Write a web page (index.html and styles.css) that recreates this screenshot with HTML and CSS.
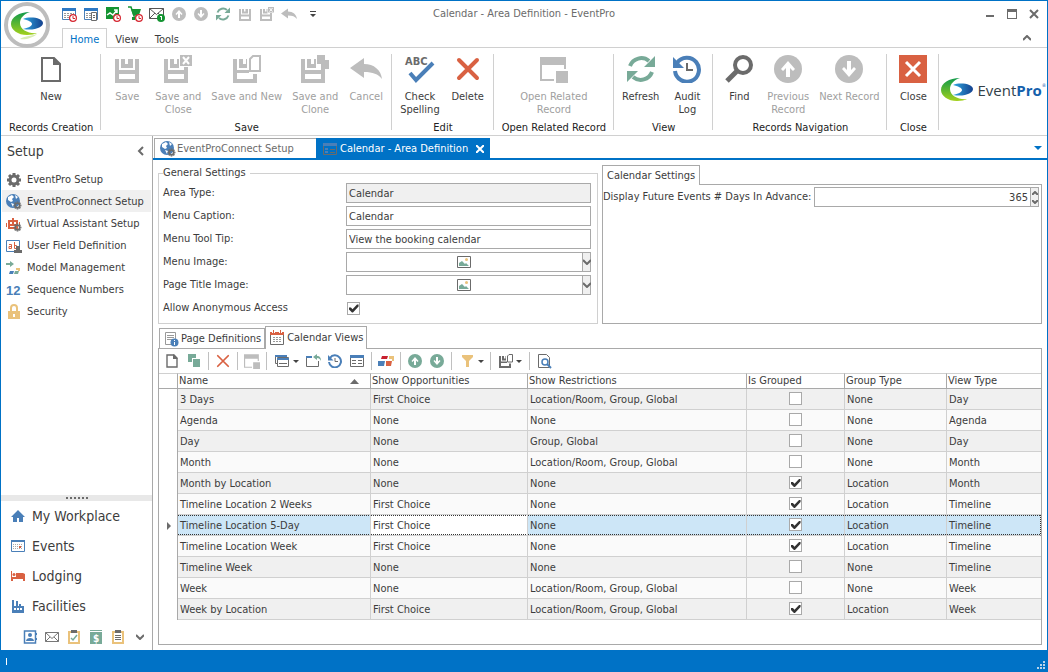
FILE: index.html
```html
<!DOCTYPE html>
<html lang="en">
<head>
    <meta charset="UTF-8">
    <meta name="viewport" content="width=device-width, initial-scale=1.0">
    <title>Calendar - Area Definition - EventPro</title>
    <link rel="stylesheet" href="styles.css">
</head>
<body>
    <!-- Shared icons -->
    <svg class="sprite" aria-hidden="true">
        <defs>
            <linearGradient id="green" x1="0" y1="0" x2="0" y2="1">
                <stop offset="0" stop-color="#0f9a4a"/>
                <stop offset="1" stop-color="#a4d11c"/>
            </linearGradient>
            <linearGradient id="blue" x1="0" y1="0" x2="1" y2="0">
                <stop offset="0" stop-color="#2fa8e0"/>
                <stop offset="1" stop-color="#14418f"/>
            </linearGradient>
        </defs>
        <symbol id="swoosh" viewBox="0 0 32 24">
            <path fill="url(#green)" d="M19 0C8 0 0 5 0 12c0 6 7 11 16 11 4 0 8-1 10-2-8 1-17-3-17-10C9 6 13 2 19 0z"/>
            <path fill="url(#blue)" d="M12 7c7-3 20-1 20 4 0 4-8 8-20 6 5-1 9-3 9-5 0-2-4-4-9-5z"/>
        </symbol>
        <symbol id="floppy" viewBox="0 0 28 28">
            <path fill="currentColor" d="M2 4h4v11h16V4h4v24H2zM6 19v5h16v-5zM8 4h4v5h3V4h5v9H8z" fill-rule="evenodd"/>
        </symbol>
        <symbol id="floppy-close" viewBox="0 0 28 28">
            <path fill="currentColor" fill-rule="evenodd" d="M0 4h4v11h16v-3h4v16H0zM4 19v5h16v-5zM6 4h4v5h3V4h2v9H6z"/>
            <path fill="currentColor" d="M16 0h12v11H16z"/>
            <path stroke="#fff" stroke-width="2" d="M19 2l6 7M25 2l-6 7"/>
        </symbol>
        <symbol id="floppy-new" viewBox="0 0 28 28">
            <path fill="currentColor" fill-rule="evenodd" d="M0 4h4v11h12v3H4v6h16v-5h4v9H0zM6 4h4v5h3V4h1v9H6z"/>
            <path fill="none" stroke="currentColor" stroke-width="2" d="M17 4l3-3h7v15H17z"/>
        </symbol>
        <symbol id="floppy-clone" viewBox="0 0 28 28">
            <path fill="currentColor" fill-rule="evenodd" d="M0 4h4v11h16v-3h4v16H0zM4 19v5h16v-5zM6 4h4v5h3V4h2v9H6z"/>
            <path fill="currentColor" d="M16 0h8v5h5v9H20V9h-4z"/>
        </symbol>
        <symbol id="undo" viewBox="0 0 32 22">
            <path fill="currentColor" d="M0 10L14 0v6c10 0 17 6 18 15-4-5-9-7-18-7v6z"/>
        </symbol>
        <symbol id="refresh" viewBox="0 0 28 28">
            <path fill="none" stroke="#78aa98" stroke-width="4" d="M3 11A12 12 0 0 1 22 6M25 17A12 12 0 0 1 6 22"/>
            <path fill="#78aa98" d="M28 1v11H17zM0 27V16h11z"/>
        </symbol>
        <symbol id="history" viewBox="0 0 28 28">
            <path fill="none" stroke="#4a7fb8" stroke-width="4" d="M4 8a12 12 0 1 1-2 8"/>
            <path fill="#4a7fb8" d="M0 2v11h11z"/>
            <path fill="none" stroke="#6b6b6b" stroke-width="2" d="M14 8v7h6"/>
        </symbol>
        <symbol id="up" viewBox="0 0 28 28">
            <circle cx="14" cy="14" r="14" fill="currentColor"/>
            <path fill="#fff" d="M14 6l7 8-2 2-3-3v9h-4v-9l-3 3-2-2z"/>
        </symbol>
        <symbol id="down" viewBox="0 0 28 28">
            <circle cx="14" cy="14" r="14" fill="currentColor"/>
            <path fill="#fff" d="M14 22l7-8-2-2-3 3V6h-4v9l-3-3-2 2z"/>
        </symbol>
        <symbol id="related" viewBox="0 0 28 28">
            <path fill="currentColor" d="M0 2h26v12h-2v-4H2v14h12v2H0zM16 16h12v12H16z"/>
        </symbol>
        <symbol id="clock-badge" viewBox="0 0 8 8">
            <circle cx="4" cy="4" r="3.4" fill="#fff" stroke="#d5252f" stroke-width="1.2"/>
            <path fill="none" stroke="#d5252f" d="M4 2v2.500h2"/>
        </symbol>
        <symbol id="calendar" viewBox="0 0 16 16">
            <path fill="#fff" stroke="#4a7fb8" d="M1.500 2.500h13v11h-13z"/>
            <path fill="#2c78c4" d="M1 2h14v3H1z"/>
            <path stroke="#999" stroke-dasharray="2 1" d="M3 7.500h10M3 9.500h10M3 11.500h10"/>
        </symbol>
        <symbol id="cross" viewBox="0 0 16 16">
            <path stroke="currentColor" stroke-width="2" stroke-linecap="round" d="M2 2l12 12M14 2L2 14"/>
        </symbol>
        <symbol id="gear" viewBox="0 0 16 16">
            <circle cx="8" cy="8" r="4" fill="none" stroke="#6b6b6b" stroke-width="3"/>
            <path stroke="#6b6b6b" stroke-width="3" d="M8 1v2M8 13v2M1 8h2M13 8h2M3 3l1.500 1.500M11.500 11.500L13 13M13 3l-1.500 1.500M4.500 11.500L3 13"/>
        </symbol>
        <symbol id="globe" viewBox="0 0 16 16">
            <circle cx="7" cy="7" r="7" fill="#4a7fb8"/>
            <path fill="#fff" d="M2 3l4-2 2 2-2 2 1 2-2 1-3-2zM9 1l3 2-2 2zM5 9l3 1-1 3z"/>
            <use href="#gear" x="7" y="7" width="9" height="9"/>
        </symbol>
        <symbol id="picture" viewBox="0 0 14 12">
            <path fill="#fff" stroke="#6b6b6b" d="M.5.5h13v11H.5z"/>
            <path fill="#78aa98" d="M2 10V7l3-2 3 3 1-1 3 3z"/>
            <circle cx="9.500" cy="3.500" r="1.500" fill="#eac27b"/>
        </symbol>
        <symbol id="page" viewBox="0 0 16 16">
            <path fill="#fff" stroke="#6b6b6b" stroke-width="1.400" d="M3 2h7l3 3v9H3z"/>
            <path fill="#6b6b6b" d="M9 1v5h5z"/>
        </symbol>
        <symbol id="caret" viewBox="0 0 6 3">
            <path fill="#444" d="M0 0h6L3 3z"/>
        </symbol>
        <symbol id="chevron" viewBox="0 0 8 6">
            <path fill="none" stroke="#6b6b6b" stroke-width="2" d="M0 1l4 4 4-4"/>
        </symbol>
    </svg>

    <div class="window">
        <header class="titlebar">
            <button class="app-button" aria-label="Application menu">
                <svg class="app-logo" viewBox="0 0 32 32"><use href="#swoosh" y="3" width="32" height="24"/><path fill="#d9ecb4" d="M9 30c5 1 13-1 17-5-6 2-13 2-17 5z"/></svg>
            </button>
            <div class="quick-access">
                <button class="icon-btn" aria-label="Event calendar"><svg viewBox="0 0 16 16"><use href="#calendar"/><use href="#clock-badge" x="8" y="8" width="8" height="8"/></svg></button>
                <button class="icon-btn" aria-label="Event list"><svg viewBox="0 0 16 16"><use href="#calendar"/><path fill="#fff" stroke="#6b6b6b" d="M8.500 6.500h5v8h-5z"/><path stroke="#6b6b6b" d="M10 9.500h2M10 11.500h2"/></svg></button>
                <button class="icon-btn" aria-label="Sales"><svg viewBox="0 0 16 16"><path fill="#149432" d="M1 1h13v12H1z"/><path fill="none" stroke="#fff" stroke-width="1.500" d="M2 9l3-2 3 2 4-5M9 4h3v3"/><use href="#clock-badge" x="8" y="8" width="8" height="8"/></svg></button>
                <button class="icon-btn" aria-label="Orders"><svg viewBox="0 0 16 16"><path fill="none" stroke="#149432" stroke-width="1.500" d="M1 1h3l3 9h7"/><path fill="#149432" d="M4 3h10l-2 6H6zM5 11h3v3H5z"/><use href="#clock-badge" x="8" y="8" width="8" height="8"/></svg></button>
                <button class="icon-btn" aria-label="Messages"><svg viewBox="0 0 16 16"><path fill="#fff" stroke="#555" d="M.5 2.500h14v10H.5zM.5 2.500l7 6 7-6M.5 12.500L6 7M14.500 12.500L9 7"/><circle cx="12" cy="12" r="4" fill="#149432"/><path stroke="#fff" d="M12.500 10v4M11 10.500h1"/></svg></button>
                <button class="icon-btn muted" aria-label="Previous" disabled><svg class="icon-14"><use href="#up"/></svg></button>
                <button class="icon-btn muted" aria-label="Next" disabled><svg class="icon-14"><use href="#down"/></svg></button>
                <button class="icon-btn" aria-label="Refresh"><svg class="icon-14"><use href="#refresh"/></svg></button>
                <button class="icon-btn muted" aria-label="Save" disabled><svg class="icon-14"><use href="#floppy"/></svg></button>
                <button class="icon-btn muted" aria-label="Save and close" disabled><svg class="icon-14"><use href="#floppy-close"/></svg></button>
                <button class="icon-btn muted" aria-label="Cancel" disabled><svg><use href="#undo"/></svg></button>
                <button class="icon-btn qat-more" aria-label="Customize"><svg viewBox="0 0 6 6"><path fill="#444" d="M0 0h6v1H0zM0 3h6L3 6z"/></svg></button>
            </div>
            <h1 class="window-title">Calendar - Area Definition - EventPro</h1>
            <div class="window-controls">
                <button class="icon-btn" aria-label="Minimize"><svg viewBox="0 0 16 16"><path fill="#6b6b6b" d="M4 9h8v2H4z"/></svg></button>
                <button class="icon-btn" aria-label="Maximize"><svg viewBox="0 0 16 16"><path fill="#6b6b6b" fill-rule="evenodd" d="M3 3h10v10H3zM4 6h8v6H4z"/></svg></button>
                <button class="icon-btn" aria-label="Close window"><svg viewBox="0 0 16 16"><path stroke="#6b6b6b" stroke-width="2" d="M4 4l8 8M12 4l-8 8"/></svg></button>
            </div>
        </header>

        <nav class="ribbon-tabs">
            <button class="ribbon-tab active">Home</button>
            <button class="ribbon-tab">View</button>
            <button class="ribbon-tab">Tools</button>
            <button class="collapse" aria-label="Collapse ribbon"><svg viewBox="0 0 8 6"><path fill="none" stroke="#6b6b6b" stroke-width="2" d="M0 5l4-4 4 4"/></svg></button>
        </nav>

        <section class="ribbon">
            <div class="group">
                <div class="group-buttons">
                    <button class="ribbon-btn"><svg viewBox="0 0 28 28"><path fill="#fff" stroke="#6b6b6b" stroke-width="2" d="M5 3h12l6 6v17H5z"/><path fill="#6b6b6b" d="M16 2v8h8z"/></svg>New</button>
                </div>
                <div class="group-title">Records Creation</div>
            </div>
            <div class="group">
                <div class="group-buttons">
                    <button class="ribbon-btn" disabled><svg><use href="#floppy"/></svg>Save</button>
                    <button class="ribbon-btn" disabled><svg><use href="#floppy-close"/></svg>Save and<br>Close</button>
                    <button class="ribbon-btn" disabled><svg><use href="#floppy-new"/></svg>Save and New</button>
                    <button class="ribbon-btn" disabled><svg><use href="#floppy-clone"/></svg>Save and<br>Clone</button>
                    <button class="ribbon-btn" disabled><svg class="wide"><use href="#undo"/></svg>Cancel</button>
                </div>
                <div class="group-title">Save</div>
            </div>
            <div class="group">
                <div class="group-buttons">
                    <button class="ribbon-btn"><svg viewBox="0 0 28 28"><text class="abc" x="-1" y="10">ABC</text><path fill="none" stroke="#4a7fb8" stroke-width="4" d="M4 18l6 7L27 8"/></svg>Check<br>Spelling</button>
                    <button class="ribbon-btn"><svg class="red" viewBox="0 0 28 28"><path stroke="currentColor" stroke-width="4" stroke-linecap="round" d="M5 5l18 18M23 5L5 23"/></svg>Delete</button>
                </div>
                <div class="group-title">Edit</div>
            </div>
            <div class="group">
                <div class="group-buttons">
                    <button class="ribbon-btn" disabled><svg><use href="#related"/></svg>Open Related<br>Record</button>
                </div>
                <div class="group-title">Open Related Record</div>
            </div>
            <div class="group">
                <div class="group-buttons">
                    <button class="ribbon-btn"><svg><use href="#refresh"/></svg>Refresh</button>
                    <button class="ribbon-btn"><svg><use href="#history"/></svg>Audit<br>Log</button>
                </div>
                <div class="group-title">View</div>
            </div>
            <div class="group">
                <div class="group-buttons">
                    <button class="ribbon-btn"><svg viewBox="0 0 28 28"><circle cx="18" cy="10" r="8" fill="none" stroke="#6b6b6b" stroke-width="4"/><path stroke="#6b6b6b" stroke-width="5" d="M12 16L2 26"/></svg>Find</button>
                    <button class="ribbon-btn" disabled><svg><use href="#up"/></svg>Previous<br>Record</button>
                    <button class="ribbon-btn" disabled><svg><use href="#down"/></svg>Next Record</button>
                </div>
                <div class="group-title">Records Navigation</div>
            </div>
            <div class="group">
                <div class="group-buttons">
                    <button class="ribbon-btn"><svg viewBox="0 0 28 28"><path fill="#d96142" d="M0 0h28v28H0z"/><path stroke="#fff" stroke-width="3" d="M7 7l14 14M21 7L7 21"/></svg>Close</button>
                </div>
                <div class="group-title">Close</div>
            </div>
            <div class="brand">
                <svg class="brand-mark"><use href="#swoosh"/></svg>
                <span class="brand-name">Event<b>Pro</b></span>
                <span class="brand-reg">®</span>
            </div>
        </section>

        <div class="workspace">
            <aside class="sidebar">
                <div class="sidebar-head">
                    <h2>Setup</h2>
                    <button class="collapse-left" aria-label="Collapse panel"><svg viewBox="0 0 7 10"><path fill="none" stroke="#6b6b6b" stroke-width="2" d="M6 1L2 5l4 4"/></svg></button>
                </div>
                <ul class="setup-list">
                    <li><a href="#"><svg><use href="#gear"/></svg>EventPro Setup</a></li>
                    <li><a href="#" class="current"><svg><use href="#globe"/></svg>EventProConnect Setup</a></li>
                    <li><a href="#"><svg viewBox="0 0 16 16"><path fill="#d96142" d="M2 4h4V2h2v2h4v9H2zM0 7h1v4H0zM13 6h1v3h-1z"/><path fill="#fff" d="M4 6h2v2H4zM8 6h2v2H8zM4 10h5v1H4z"/><use href="#gear" x="7" y="7" width="9" height="9"/></svg>Virtual Assistant Setup</a></li>
                    <li><a href="#"><svg viewBox="0 0 16 16"><path fill="#fff" stroke="#4a7fb8" d="M.5 2.500h13v11H.5z"/><path fill="none" stroke="#d96142" d="M3 6.500h2.500v4H3v-2h2.500M8.500 4v6.500h2v-3h-2"/><path fill="#6b6b6b" d="M10 8h4v4h2v3H8v-3h2z"/></svg>User Field Definition</a></li>
                    <li><a href="#"><svg viewBox="0 0 16 16"><path fill="#78aa98" d="M0 3h4V1l4 3-4 3V5H0zM9 11h4l-1 3H8z"/><path fill="#4a7fb8" d="M4 11h4l-1 3H3z"/><path fill="#eac27b" d="M10 8h4v3h-2v-1h-2z"/></svg>Model Management</a></li>
                    <li><a href="#"><svg viewBox="0 0 16 16"><text class="digits" x="0" y="13">12</text></svg>Sequence Numbers</a></li>
                    <li><a href="#"><svg viewBox="0 0 16 16"><path fill="#eac27b" d="M2 7h12v8H2z"/><path fill="none" stroke="#eac27b" stroke-width="2" d="M5 8V4a3 3 0 0 1 6 0v4"/><path fill="#fff" d="M7 10h2v3H7z"/></svg>Security</a></li>
                </ul>
                <div class="splitter">
                    <svg viewBox="0 0 22 2"><path stroke="#6b6b6b" stroke-width="2" stroke-dasharray="2 2" d="M0 1h22"/></svg>
                </div>
                <ul class="nav-list">
                    <li><a href="#"><svg viewBox="0 0 16 16"><path fill="#4a7fb8" d="M8 2l7 7h-2v5H9v-4H7v4H3V9H1z"/></svg>My Workplace</a></li>
                    <li><a href="#"><svg viewBox="0 0 16 16"><path fill="#fff" stroke="#4a7fb8" d="M1.500 2.500h13v11h-13z"/><path fill="#4a7fb8" d="M1 2h14v2H1z"/><path stroke="#aaa" stroke-dasharray="1 1" d="M3 6.500h10M3 8.500h10M3 10.500h10"/><path fill="#d96142" d="M9 8h2v2H9z"/></svg>Events</a></li>
                    <li><a href="#"><svg viewBox="0 0 16 16"><path fill="#d96142" d="M1 3h1v6h13v4h-2v-2H3v2H1zM6 5h7l2 1v3H6z"/><circle cx="4" cy="6.500" r="1.500" fill="#d96142"/></svg>Lodging</a></li>
                    <li><a href="#"><svg viewBox="0 0 16 16"><path fill="#4a7fb8" d="M2 15V2h2v6h2V3h2v5h1V6h2v2h3v7z"/><path stroke="#fff" stroke-width="2" stroke-dasharray="2 1" d="M4 11h8"/></svg>Facilities</a></li>
                </ul>
                <div class="nav-icons">
                    <button class="icon-btn" aria-label="Contacts"><svg viewBox="0 0 16 16"><path fill="#fff" stroke="#4a7fb8" stroke-width="1.500" d="M2.500 2h11v12h-11z"/><circle cx="8" cy="6" r="2" fill="#4a7fb8"/><path fill="#4a7fb8" d="M4 12c0-4 8-4 8 0zM14 4h1v2h-1zM14 9h1v2h-1z"/></svg></button>
                    <button class="icon-btn" aria-label="Mail"><svg viewBox="0 0 16 16"><path fill="none" stroke="#777" d="M1.500 3.500h13v9h-13zM1.500 3.500l6.500 6 6.500-6M1.500 12.500L6 8M14.500 12.500L10 8"/></svg></button>
                    <button class="icon-btn" aria-label="Tasks"><svg viewBox="0 0 16 16"><path fill="#fff" stroke="#eac27b" stroke-width="2" d="M3 3h10v11H3z"/><path fill="#6b6b6b" d="M5 1h6v3H5z"/><path fill="none" stroke="#78aa98" stroke-width="1.500" d="M5 9l2 2 4-5"/></svg></button>
                    <button class="icon-btn" aria-label="Accounting"><svg viewBox="0 0 16 16"><path fill="#78aa98" d="M2 1h12v1H2zM2 3h12v12H2z"/><text class="dollar" x="5" y="13">$</text></svg></button>
                    <button class="icon-btn" aria-label="Reports"><svg viewBox="0 0 16 16"><path fill="#fff" stroke="#eac27b" stroke-width="2" d="M3 3h10v11H3z"/><path fill="#6b6b6b" d="M5 1h6v3H5zM5 6h6v1H5zM5 8h6v1H5zM5 10h6v1H5z"/></svg></button>
                    <button class="icon-btn" aria-label="More"><svg class="icon-8"><use href="#chevron"/></svg></button>
                </div>
            </aside>

            <main class="content">
                <div class="doc-tabs">
                    <div class="doc-tab"><svg><use href="#globe"/></svg><a href="#">EventProConnect Setup</a></div>
                    <div class="doc-tab active">
                        <svg viewBox="0 0 16 16"><path fill="none" stroke="#6b6b6b" d="M1.500 2.500h13v11h-13z"/><path fill="#4a7fb8" d="M1 2h14v3H1zM3 7h3v2H3zM3 10h3v2H3z"/><path stroke="#6b6b6b" d="M8 8.500h5M8 11.500h5"/></svg>
                        <a href="#">Calendar - Area Definition</a>
                        <button class="tab-close" aria-label="Close tab"><svg viewBox="0 0 8 8"><path stroke="#fff" stroke-width="2" d="M0 0l8 8M8 0L0 8"/></svg></button>
                    </div>
                    <button class="doc-more" aria-label="Tab list"><svg viewBox="0 0 8 4"><path fill="#0072c6" d="M0 0h8L4 4z"/></svg></button>
                </div>

                <div class="page">
                    <div class="settings">
                        <fieldset class="general">
                            <legend>General Settings</legend>
                            <label for="area-type">Area Type:</label>
                            <input class="field" id="area-type" type="text" value="Calendar" readonly>
                            <label for="menu-caption">Menu Caption:</label>
                            <input class="field" id="menu-caption" type="text" value="Calendar">
                            <label for="menu-tip">Menu Tool Tip:</label>
                            <input class="field" id="menu-tip" type="text" value="View the booking calendar">
                            <label for="menu-image">Menu Image:</label>
                            <div class="picker">
                                <select class="field" id="menu-image"><option></option></select>
                                <svg class="picker-image"><use href="#picture"/></svg>
                                <span class="picker-arrow"><svg class="icon-8"><use href="#chevron"/></svg></span>
                            </div>
                            <label for="title-image">Page Title Image:</label>
                            <div class="picker">
                                <select class="field" id="title-image"><option></option></select>
                                <svg class="picker-image"><use href="#picture"/></svg>
                                <span class="picker-arrow"><svg class="icon-8"><use href="#chevron"/></svg></span>
                            </div>
                            <label for="anonymous">Allow Anonymous Access</label>
                            <input class="check" id="anonymous" type="checkbox" checked>
                        </fieldset>

                        <section class="calendar-settings">
                            <button class="panel-tab active">Calendar Settings</button>
                            <div class="panel">
                                <div class="days-row">
                                    <label for="days">Display Future Events # Days In Advance:</label>
                                    <div class="spinner">
                                        <input class="field" id="days" type="number" value="365">
                                        <div class="spin-buttons">
                                            <button aria-label="Increase"><svg viewBox="0 0 6 4"><path fill="none" stroke="#6b6b6b" stroke-width="2" d="M0 4l3-3 3 3"/></svg></button>
                                            <button aria-label="Decrease"><svg viewBox="0 0 6 4"><path fill="none" stroke="#6b6b6b" stroke-width="2" d="M0 0l3 3 3-3"/></svg></button>
                                        </div>
                                    </div>
                                </div>
                            </div>
                        </section>
                    </div>

                    <div class="panel-tabs">
                        <button class="panel-tab"><svg viewBox="0 0 16 16"><path fill="#fff" stroke="#999" d="M2.500 1.500h10v12h-10z"/><path stroke="#999" d="M4 4.500h7M4 6.500h7M4 8.500h5"/><circle cx="11.500" cy="11.500" r="4" fill="#4a7fb8"/><path fill="#fff" d="M11 9h1v1h-1zM11 11h1v3h-1z"/></svg>Page Definitions</button>
                        <button class="panel-tab active"><svg viewBox="0 0 16 16"><path fill="#fff" stroke="#6b6b6b" d="M1.500 2.500h13v12h-13z"/><path fill="#d96142" d="M1 2h14v3H1z"/><path fill="#fff" d="M3 1h3v2H3zM10 1h3v2h-3z"/><path fill="#d96142" d="M4 0h1v3H4zM11 0h1v3h-1z"/><path stroke="#999" stroke-dasharray="2 1" d="M4 7.500h8M4 9.500h8M4 11.500h8"/></svg>Calendar Views</button>
                    </div>

                    <section class="panel views">
                        <div class="toolbar">
                            <button class="icon-btn" aria-label="New"><svg><use href="#page"/></svg></button>
                            <button class="icon-btn" aria-label="Clone"><svg viewBox="0 0 16 16"><path fill="#78aa98" d="M2 1h8v4H6v4H2zM7 6h7v8H7z"/></svg></button>
                            <span class="sep"></span>
                            <button class="icon-btn red" aria-label="Delete"><svg class="icon-14"><use href="#cross"/></svg></button>
                            <span class="sep"></span>
                            <button class="icon-btn muted" aria-label="Open related" disabled><svg><use href="#related"/></svg></button>
                            <span class="sep"></span>
                            <button class="icon-btn drop" aria-label="Views"><svg viewBox="0 0 16 16"><path fill="#fff" stroke="#6b6b6b" d="M1.500 2.500h11v8h-11z"/><path fill="#fff" stroke="#6b6b6b" d="M3.500 4.500h11v9h-11z"/><path fill="#4a7fb8" d="M1 2h12v2H1zM3 5h12v2H3z"/><path stroke="#6b6b6b" d="M5 10.500h8"/></svg><svg class="caret"><use href="#caret"/></svg></button>
                            <button class="icon-btn" aria-label="Export"><svg viewBox="0 0 16 16"><path fill="none" stroke="#6b6b6b" d="M7 3.500H1.500v10h12V8"/><path fill="#4a7fb8" d="M1 3h6v2H1z"/><path fill="#78aa98" d="M8 4l4-3v2c3 0 4 2 4 5-1-2-2-3-4-3v2z"/></svg></button>
                            <button class="icon-btn" aria-label="History"><svg class="icon-14"><use href="#history"/></svg></button>
                            <button class="icon-btn" aria-label="Layout"><svg viewBox="0 0 16 16"><path fill="#fff" stroke="#6b6b6b" d="M1.500 2.500h13v11h-13z"/><path fill="#4a7fb8" d="M1 2h14v3H1z"/><path stroke="#6b6b6b" d="M3 7.500h4M9 7.500h4M3 10.500h4M9 10.500h4"/></svg></button>
                            <span class="sep"></span>
                            <button class="icon-btn" aria-label="Categories"><svg viewBox="0 0 16 16"><path fill="#c8202f" d="M4 3h6l-1 3H3z"/><path fill="#eac27b" d="M11 3h5v5h-2V6h-3z"/><path fill="#4a7fb8" d="M0 8h7l-1 5H0z"/><path fill="#d96142" d="M8 8h6l-1 5H8z"/></svg></button>
                            <span class="sep"></span>
                            <button class="icon-btn green" aria-label="Move up"><svg class="icon-14"><use href="#up"/></svg></button>
                            <button class="icon-btn green" aria-label="Move down"><svg class="icon-14"><use href="#down"/></svg></button>
                            <span class="sep"></span>
                            <button class="icon-btn drop" aria-label="Filter"><svg viewBox="0 0 16 16"><path fill="#eac27b" d="M3 2h11v2l-4 4v6H7V8L3 4z"/></svg><svg class="caret"><use href="#caret"/></svg></button>
                            <span class="sep"></span>
                            <button class="icon-btn drop dark" aria-label="Save layout"><svg class="icon-14"><use href="#floppy-new"/></svg><svg class="caret"><use href="#caret"/></svg></button>
                            <span class="sep"></span>
                            <button class="icon-btn" aria-label="Preview"><svg viewBox="0 0 16 16"><path fill="#fff" stroke="#6b6b6b" d="M2.500 1.500h8l3 3v10h-11z"/><circle cx="9" cy="9" r="3" fill="#fff" stroke="#4a7fb8" stroke-width="1.500"/><path stroke="#4a7fb8" stroke-width="2" d="M11 11l4 4"/></svg></button>
                        </div>

                        <table class="grid">
                            <colgroup>
                                <col class="col-mark"><col class="col-name"><col class="col-opp"><col class="col-restr"><col class="col-grouped"><col class="col-group"><col>
                            </colgroup>
                            <thead>
                                <tr>
                                    <th></th>
                                    <th><div class="sorted">Name <svg viewBox="0 0 9 5"><path fill="#6b6b6b" d="M0 5h9L4.500 0z"/></svg></div></th>
                                    <th>Show Opportunities</th>
                                    <th>Show Restrictions</th>
                                    <th>Is Grouped</th>
                                    <th>Group Type</th>
                                    <th>View Type</th>
                                </tr>
                            </thead>
                            <tbody>
                                <tr><td></td><td>3 Days</td><td>First Choice</td><td>Location/Room, Group, Global</td><td><input class="check" type="checkbox" aria-label="Is Grouped"></td><td>None</td><td>Day</td></tr>
                                <tr><td></td><td>Agenda</td><td>None</td><td>None</td><td><input class="check" type="checkbox" aria-label="Is Grouped"></td><td>None</td><td>Agenda</td></tr>
                                <tr><td></td><td>Day</td><td>None</td><td>Group, Global</td><td><input class="check" type="checkbox" aria-label="Is Grouped"></td><td>None</td><td>Day</td></tr>
                                <tr><td></td><td>Month</td><td>None</td><td>Location/Room, Group, Global</td><td><input class="check" type="checkbox" aria-label="Is Grouped"></td><td>None</td><td>Month</td></tr>
                                <tr><td></td><td>Month by Location</td><td>None</td><td>None</td><td><input class="check" type="checkbox" aria-label="Is Grouped" checked></td><td>Location</td><td>Month</td></tr>
                                <tr><td></td><td>Timeline Location 2 Weeks</td><td>First Choice</td><td>None</td><td><input class="check" type="checkbox" aria-label="Is Grouped" checked></td><td>Location</td><td>Timeline</td></tr>
                                <tr class="selected"><td><svg viewBox="0 0 4 8"><path fill="#6b6b6b" d="M0 0l4 4-4 4z"/></svg></td><td>Timeline Location 5-Day</td><td class="focused">First Choice</td><td>None</td><td><input class="check" type="checkbox" aria-label="Is Grouped" checked></td><td>Location</td><td>Timeline</td></tr>
                                <tr><td></td><td>Timeline Location Week</td><td>First Choice</td><td>None</td><td><input class="check" type="checkbox" aria-label="Is Grouped" checked></td><td>Location</td><td>Timeline</td></tr>
                                <tr><td></td><td>Timeline Week</td><td>None</td><td>None</td><td><input class="check" type="checkbox" aria-label="Is Grouped"></td><td>None</td><td>Timeline</td></tr>
                                <tr><td></td><td>Week</td><td>None</td><td>Location/Room, Group, Global</td><td><input class="check" type="checkbox" aria-label="Is Grouped"></td><td>None</td><td>Week</td></tr>
                                <tr><td></td><td>Week by Location</td><td>First Choice</td><td>Location/Room, Group, Global</td><td><input class="check" type="checkbox" aria-label="Is Grouped" checked></td><td>Location</td><td>Week</td></tr>
                            </tbody>
                        </table>
                    </section>
                </div>
            </main>
        </div>

        <footer class="statusbar">
            <span class="status-mark"></span>
            <svg class="grip" viewBox="0 0 8 8"><path fill="#b9d4ea" d="M6 0h2v2H6zM6 3h2v2H6zM3 3h2v2H3zM0 6h2v2H0zM3 6h2v2H3zM6 6h2v2H6z"/></svg>
        </footer>
    </div>
</body>
</html>
```
FILE: styles.css
```css
* {
    box-sizing: border-box;
}

body {
    margin: 0;
    font-family: Tahoma, "DejaVu Sans Condensed", "Noto Sans", sans-serif;
    font-size: 11px;
    line-height: 14px;
    color: #3c3c3c;
    background: #fff;
}

button, input, select {
    font: inherit;
    color: inherit;
}

button {
    padding: 0;
    border: 0;
    background: none;
}

a {
    color: inherit;
    text-decoration: none;
}

ul {
    list-style: none;
    margin: 0;
    padding: 0;
}

svg {
    display: block;
    flex: none;
    width: 16px;
    height: 16px;
}

.sprite {
    position: absolute;
    width: 0;
    height: 0;
}

.window {
    display: flex;
    flex-direction: column;
    min-height: 100vh;
    border: 1px solid #0072c6;
    border-bottom: 0;
}

.icon-btn {
    display: flex;
    align-items: center;
    justify-content: center;
    width: 22px;
    height: 22px;
}

.icon-14 {
    width: 14px;
    height: 14px;
}

.icon-8 {
    width: 8px;
    height: 6px;
}

.muted { color: #bdbdbd; }
.red { color: #d96142; }
.green { color: #78aa98; }
.dark { color: #6b6b6b; }

/* Title bar */
.titlebar {
    position: relative;
    display: grid;
    grid-template-columns: 1fr auto 1fr;
    align-items: center;
    height: 26px;
}

.app-button {
    position: absolute;
    top: 1px;
    left: 3px;
    z-index: 2;
    display: flex;
    align-items: center;
    justify-content: center;
    width: 46px;
    height: 46px;
    border: 4px solid #bdbdbd;
    border-radius: 50%;
    background: #fff;
}

.app-logo {
    width: 32px;
    height: 32px;
}

.quick-access {
    display: flex;
    padding-left: 57px;
}

.qat-more {
    width: 26px;
}

.qat-more svg {
    width: 6px;
    height: 6px;
}

.window-title {
    margin: 0;
    font-size: 11px;
    font-weight: normal;
    color: #6b6b6b;
}

.window-controls {
    display: flex;
    justify-content: flex-end;
    padding-right: 2px;
}

/* Ribbon */
.ribbon-tabs {
    display: flex;
    height: 21px;
    padding: 1px 0 0 61px;
    border-bottom: 1px solid #d0d0d0;
}

.ribbon-tab {
    height: 20px;
    padding: 2px 7px 0;
    border: 1px solid transparent;
    border-bottom: 0;
}

.ribbon-tab.active {
    border-color: #d0d0d0;
    background: #fff;
    color: #0072c6;
}

.collapse {
    margin-left: auto;
    padding-right: 16px;
}

.collapse svg {
    width: 8px;
    height: 6px;
}

.ribbon {
    display: flex;
    height: 88px;
    padding: 6px 0 0;
    border-bottom: 1px solid #d0d0d0;
}

.group {
    display: flex;
    flex-direction: column;
    justify-content: space-between;
    padding: 0 3px;
    background: linear-gradient(#d0d0d0, #d0d0d0) right top / 1px 76px no-repeat;
}

.group-buttons {
    display: flex;
    justify-content: center;
}

.group-title {
    padding: 0 5px;
    text-align: center;
    white-space: nowrap;
    color: #222;
}

.ribbon-btn {
    display: flex;
    flex-direction: column;
    align-items: center;
    min-width: 46px;
    padding: 0 5px;
    line-height: 13px;
    white-space: nowrap;
}

.ribbon-btn svg {
    width: 28px;
    height: 28px;
    margin: 1px 0 7px;
    overflow: visible;
}

.ribbon-btn .wide {
    width: 32px;
}

.ribbon-btn:disabled {
    color: #a0a0a0;
}

.ribbon-btn:disabled svg {
    color: #bdbdbd;
}

.abc {
    font-size: 11px;
    font-weight: bold;
    fill: #6b6b6b;
}

.brand {
    display: flex;
    align-items: center;
    height: 72px;
    padding-left: 2px;
}

.brand-mark {
    width: 32px;
    height: 24px;
    margin-right: 4px;
}

.brand-name {
    font-family: "Open Sans", sans-serif;
    font-size: 15px;
    color: #333f48;
}

.brand-name b {
    color: #1560ac;
}

.brand-reg {
    align-self: flex-start;
    margin-top: 24px;
    font-size: 5px;
    color: #1560ac;
}

/* Left navigation */
.workspace {
    display: flex;
    flex: 1;
}

.sidebar {
    display: flex;
    flex-direction: column;
    flex: none;
    width: 152px;
    border-right: 1px solid #a9a9a9;
}

.sidebar-head {
    display: flex;
    align-items: center;
    justify-content: space-between;
    height: 32px;
    padding: 0 8px 2px 6px;
}

.sidebar-head h2 {
    margin: 0;
    font-size: 14px;
    font-weight: normal;
}

.collapse-left svg {
    width: 7px;
    height: 10px;
}

.setup-list a {
    display: flex;
    align-items: center;
    gap: 5px;
    height: 22px;
    margin: 0 1px;
    padding: 1px 0 0 4px;
    white-space: nowrap;
}

.setup-list .current {
    background: #f0f0f0;
}

.digits {
    font-family: "Liberation Sans", sans-serif;
    font-size: 13px;
    font-weight: bold;
    fill: #4a7fb8;
}

.splitter {
    display: flex;
    align-items: center;
    justify-content: center;
    height: 6px;
    margin-top: auto;
    background: #e8e8e8;
}

.splitter svg {
    width: 22px;
    height: 2px;
}

.nav-list a {
    display: flex;
    align-items: center;
    gap: 6px;
    height: 30px;
    padding-left: 9px;
    font-size: 14px;
}

.nav-icons {
    display: flex;
    justify-content: flex-end;
    padding: 5px 1px 2px;
}

.dollar {
    font-size: 10px;
    font-weight: bold;
    fill: #fff;
}

/* Document tabs */
.content {
    display: flex;
    flex-direction: column;
    flex: 1;
    min-width: 0;
}

.doc-tabs {
    display: flex;
    height: 24px;
    padding: 2px 0 0 1px;
    border-bottom: 2px solid #0072c6;
}

.doc-tab {
    display: flex;
    align-items: center;
    gap: 1px;
    width: 162px;
    padding-left: 5px;
    border: 1px solid #a9a9a9;
    border-width: 1px 0 0 1px;
    color: #6b6b6b;
    white-space: nowrap;
}

.doc-tab.active {
    gap: 2px;
    width: 174px;
    border-color: #0072c6;
    background: #0072c6;
    color: #fff;
}

.tab-close {
    margin: 0 6px 0 auto;
}

.tab-close svg {
    width: 8px;
    height: 8px;
}

.doc-more {
    margin-left: auto;
    padding-right: 5px;
}

.doc-more svg {
    width: 8px;
    height: 4px;
}

/* Settings */
.page {
    display: flex;
    flex-direction: column;
    flex: 1;
    padding: 5px;
}

.settings {
    display: grid;
    grid-template-columns: 1fr 1fr;
    gap: 4px;
}

.general {
    display: grid;
    grid-template-columns: 183px 1fr;
    grid-auto-rows: 20px;
    row-gap: 3px;
    align-items: center;
    min-width: 0;
    margin: 1px 0 0;
    padding: 3px 6px 5px 4px;
    border: 1px solid #d0d0d0;
}

.general legend {
    padding: 0 4px 0 0;
}

.field {
    width: 100%;
    height: 20px;
    padding: 0 2px;
    border: 1px solid #a9a9a9;
    border-radius: 0;
    background: #fff;
    appearance: none;
}

.field:read-only:not(select) {
    background: #f0f0f0;
}

.picker, .spinner {
    display: grid;
}

.picker > *, .spinner > * {
    grid-area: 1 / 1;
}

.picker-image {
    place-self: center;
    width: 14px;
    height: 12px;
    margin-right: 9px;
    pointer-events: none;
}

.picker-arrow {
    display: flex;
    align-items: center;
    justify-content: center;
    justify-self: end;
    width: 9px;
    border: 1px solid #a9a9a9;
    background: #f0f0f0;
    pointer-events: none;
}

.check {
    display: block;
    width: 13px;
    height: 13px;
    margin: 0 1px;
    border: 1px solid #a9a9a9;
    background: #fff;
    appearance: none;
}

.check:checked::before {
    content: "";
    display: block;
    width: 11px;
    height: 11px;
    background: #333;
    clip-path: polygon(9% 45%, 27% 45%, 41% 62%, 82% 18%, 96% 18%, 96% 36%, 45% 91%, 36% 91%, 9% 64%);
}

.calendar-settings {
    display: flex;
    flex-direction: column;
    align-items: flex-start;
}

.panel {
    width: 100%;
    flex: 1;
    border: 1px solid #a9a9a9;
}

.panel-tab {
    display: flex;
    align-items: center;
    gap: 2px;
    height: 20px;
    padding: 0 4px;
    border: 1px solid #a9a9a9;
    border-bottom: 0;
    white-space: nowrap;
}

.panel-tab.active {
    z-index: 1;
    margin-bottom: -1px;
    background: #fff;
}

.days-row {
    display: flex;
    align-items: center;
    gap: 3px;
    padding: 2px 2px 0 0;
    white-space: nowrap;
}

.spinner {
    flex: 1;
}

.spinner .field {
    min-width: 0;
    padding-right: 10px;
    text-align: right;
}

.spinner .field::-webkit-inner-spin-button {
    appearance: none;
}

.spin-buttons {
    display: grid;
    justify-self: end;
    width: 9px;
    border: 1px solid #a9a9a9;
    background: #f0f0f0;
}

.spin-buttons svg {
    width: 6px;
    height: 4px;
    margin: auto;
}

/* Calendar views */
.panel-tabs {
    display: flex;
    align-items: flex-end;
    margin-top: 2px;
    padding-left: 1px;
}

.panel-tabs .panel-tab {
    padding: 0 3px;
}

.panel-tabs .active {
    height: 23px;
}

.views {
    display: flex;
    flex-direction: column;
}

.toolbar {
    display: flex;
    align-items: center;
    height: 24px;
    padding-left: 2px;
}

.sep {
    width: 1px;
    height: 18px;
    margin: 0 3px;
    background: #c0c0c0;
}

.drop {
    gap: 3px;
    width: 32px;
}

.caret {
    width: 6px;
    height: 3px;
}

.grid {
    width: 100%;
    table-layout: fixed;
    border-spacing: 0;
}

.col-mark { width: 19px; }
.col-name { width: 193px; }
.col-opp { width: 157px; }
.col-restr { width: 219px; }
.col-grouped { width: 98px; }
.col-group { width: 102px; }

.grid th {
    height: 16px;
    padding: 0 2px 0 1px;
    border: 1px solid #a9a9a9;
    border-width: 1px 1px 1px 0;
    border-top-color: #d0d0d0;
    font-weight: normal;
    text-align: left;
    white-space: nowrap;
}

.grid th:last-child {
    border-right: 0;
}

.sorted {
    display: flex;
    align-items: center;
    justify-content: space-between;
    padding-right: 9px;
}

.sorted svg {
    width: 9px;
    height: 5px;
}

.grid td {
    height: 21px;
    padding: 2px 2px 0;
    border: 1px solid #d0d0d0;
    border-width: 0 1px 1px 0;
    white-space: nowrap;
}

.grid tbody tr:nth-child(odd) {
    background: #f0f0f0;
}

.grid tbody tr:nth-child(even) {
    background: #fafafa;
}

.grid td:first-child {
    border-color: #a9a9a9;
    border-bottom: 0;
    background: #fff;
}

.grid td:first-child svg {
    width: 4px;
    height: 8px;
    margin: 0 4px 2px auto;
}

.grid td:last-child {
    border-right: 0;
}

.grid .check {
    margin: 0 auto 3px;
}

/* Dotted focus frame around the selected row */
.grid .selected td:not(:first-child) {
    background-color: #cde6f7;
    background-image: repeating-linear-gradient(90deg, #333 0 1px, transparent 1px 2px), repeating-linear-gradient(90deg, #333 0 1px, transparent 1px 2px);
    background-position: top, bottom;
    background-size: 100% 1px;
    background-repeat: no-repeat;
    background-clip: padding-box;
}

.grid .selected td.focused {
    background-color: #fff;
}

.grid .selected td:last-child {
    border-right: 1px dotted #333;
}

/* Status bar */
.statusbar {
    display: flex;
    align-items: center;
    justify-content: space-between;
    height: 22px;
    padding: 0 2px 0 5px;
    background: #0072c6;
}

.status-mark {
    width: 1px;
    height: 7px;
    background: #fff;
}

.grip {
    align-self: flex-end;
    width: 8px;
    height: 8px;
    margin-bottom: 3px;
}
```
